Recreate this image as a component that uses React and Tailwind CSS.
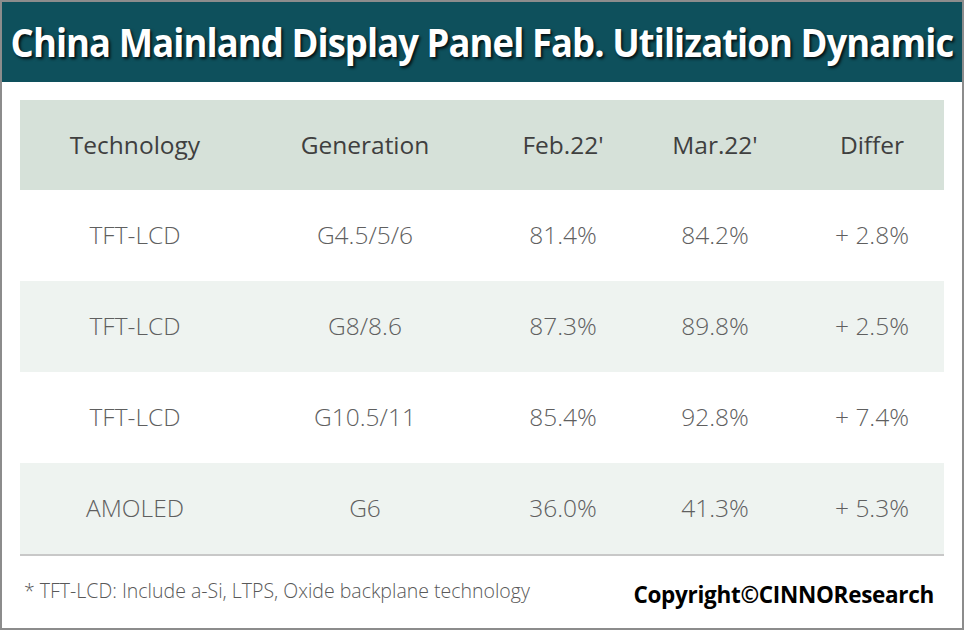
const rows = [
  ["TFT-LCD", "G4.5/5/6", "81.4%", "84.2%", "+ 2.8%"],
  ["TFT-LCD", "G8/8.6", "87.3%", "89.8%", "+ 2.5%"],
  ["TFT-LCD", "G10.5/11", "85.4%", "92.8%", "+ 7.4%"],
  ["AMOLED", "G6", "36.0%", "41.3%", "+ 5.3%"],
];

const heads = ["Technology", "Generation", "Feb.22'", "Mar.22'", "Differ"];
const cols = "grid grid-cols-[230px_230px_166px_138px_159px]";

export default function App() {
  return (
    <div className="w-[964px] h-[630px] bg-white border-2 border-[#8c8c8c] flex flex-col font-['Open_Sans',sans-serif]">
      <div className="h-[80px] bg-[#0e505c] flex items-center justify-center">
        <h1 className="text-white font-bold text-[40px] tracking-[-1px] whitespace-nowrap scale-x-[0.91] [text-shadow:2px_2px_3px_rgba(0,0,0,0.8)]">
          China Mainland Display Panel Fab. Utilization Dynamic
        </h1>
      </div>

      <div className="mx-[18px] mt-[18px] border-b-2 border-[#c8c8c8]">
        <div className={`${cols} h-[90px] bg-[#d6e1d9] items-center text-center text-[24.5px] text-[#3f3f3f]`}>
          {heads.map((h, j) => (
            <div key={h} className={j === 4 ? "pl-[17px]" : ""}>{h}</div>
          ))}
        </div>
        {rows.map((r, i) => (
          <div
            key={i}
            className={`${cols} h-[91px] items-center text-center text-[24.5px] font-light text-[#5f5f5f] ${i % 2 ? "bg-[#eef3f0]" : "bg-white"}`}
          >
            {r.map((c, j) => (
              <div key={j} className={j === 4 ? "pl-[17px]" : ""}>{c}</div>
            ))}
          </div>
        ))}
      </div>

      <div className="flex items-center justify-between px-[22px] mt-[14px]">
        <div className="text-[19.5px] font-light text-[#595959]">
          * TFT-LCD: Include a-Si, LTPS, Oxide backplane technology
        </div>
        <div className="text-[22.5px] font-bold text-black tracking-[-0.3px] mr-[6px] mt-[8px]">
          Copyright©CINNOResearch
        </div>
      </div>
    </div>
  );
}
